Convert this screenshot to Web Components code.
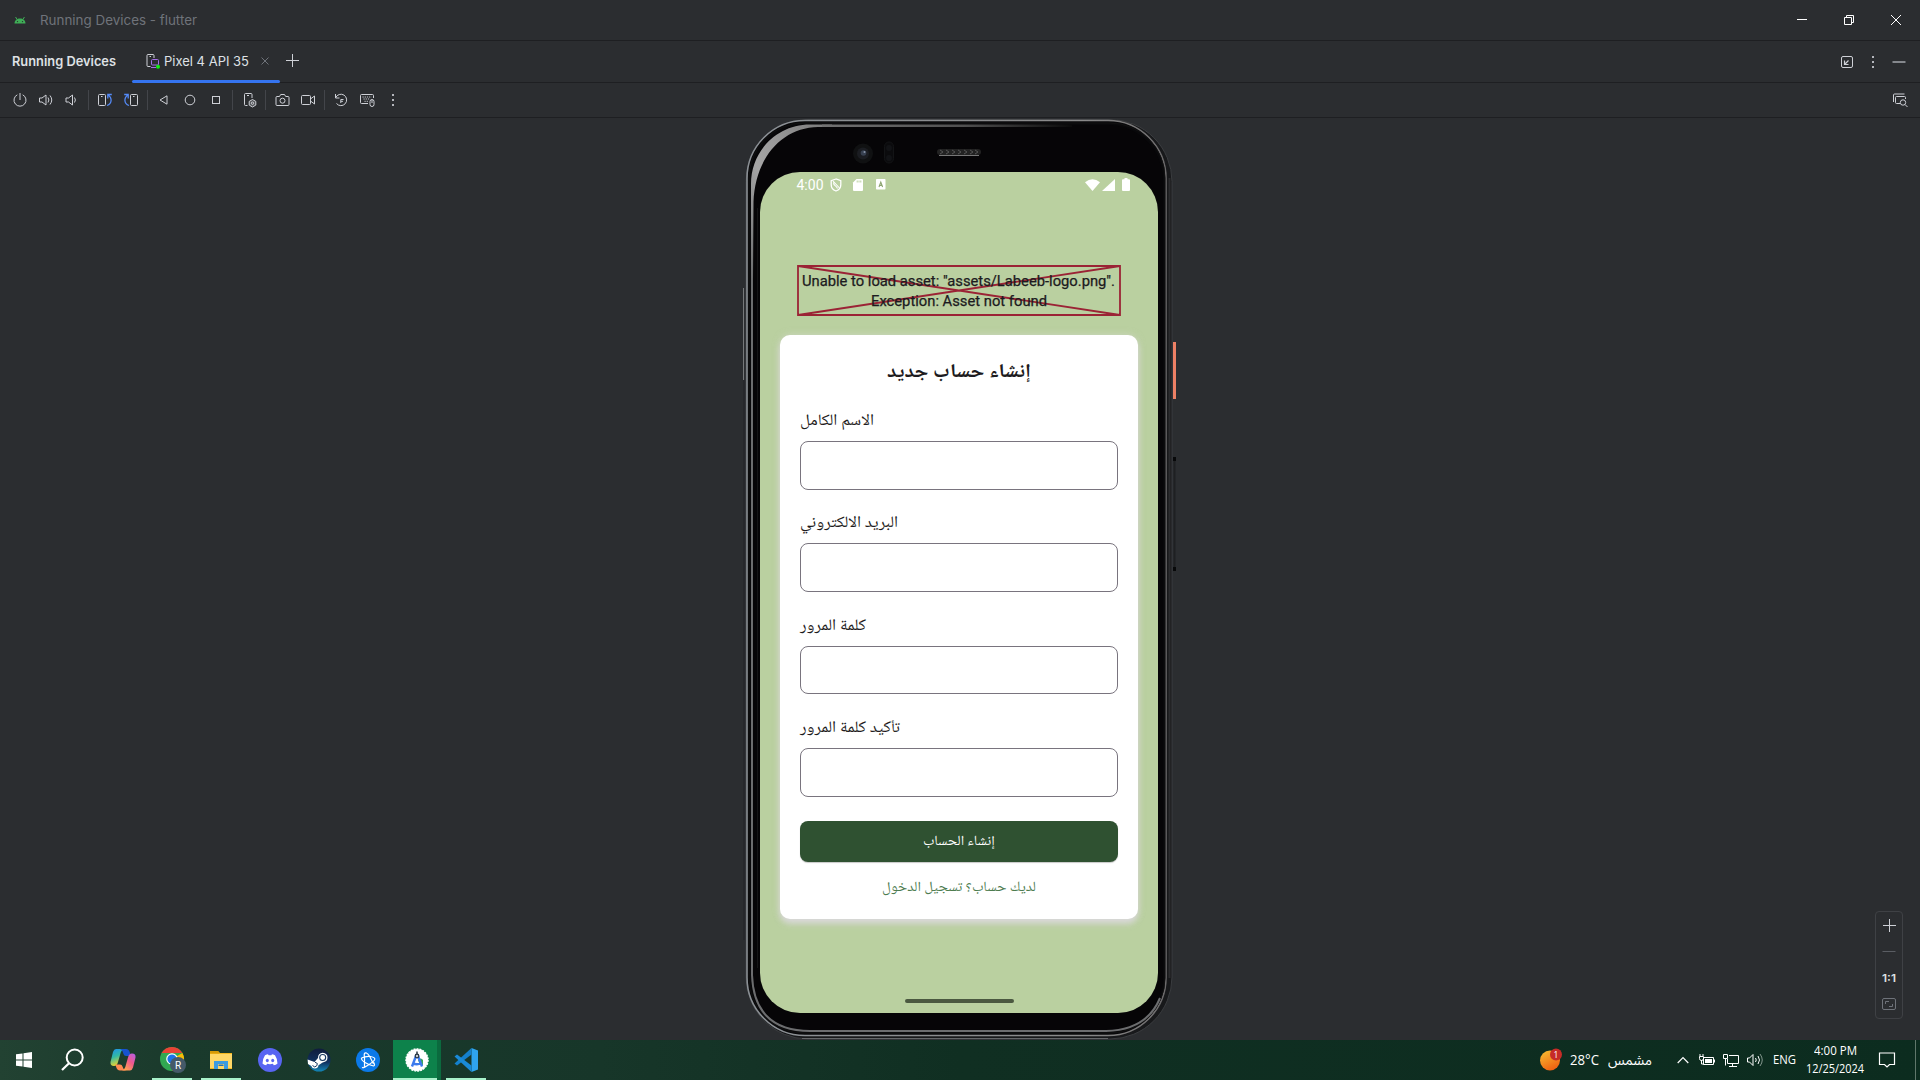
<!DOCTYPE html>
<html lang="en"><head><meta charset="utf-8"><title>Running Devices - flutter</title>
<style>
html,body{margin:0;height:100%;overflow:hidden;background:#2b2d30}
body{font-family:Inter,"Noto Sans",sans-serif}
</style></head><body><desktop-shell></desktop-shell>
<script>
const define=(name,css,html,after)=>customElements.define(name,class extends HTMLElement{
 constructor(){super();this.attachShadow({mode:'open'})}
 connectedCallback(){this.shadowRoot.innerHTML='<style>*{box-sizing:border-box}'+css+'</style>'+(typeof html==='function'?html(this):html);if(after)after(this)}
});

/* Single line of text stretched horizontally to a given width */
define('fit-text',':host{display:block;flex:none;white-space:nowrap}span{display:inline-block;transform-origin:0 50%}','<span><slot></slot></span>',el=>{
 const w=+el.getAttribute('w');el.style.width=w+'px';
 const s=el.shadowRoot.querySelector('span');const n=s.getBoundingClientRect().width;
 if(n)s.style.transform='scaleX('+(w/n)+')';
});

const I={
android:[12,12,'<path d="M0.5 9.5C.5 6.5 3 4.5 6 4.5s5.500 2 5.500 5z" fill="#3fae57"/><path d="M3 5.500 1.600 3M9 5.500 10.400 3" stroke="#3fae57"/><circle cx="3.500" cy="7.600" r=".7" fill="#2b2d30"/><circle cx="8.500" cy="7.600" r=".7" fill="#2b2d30"/>'],
device:[16,16,'<path d="M5.500 13.500H3a1 1 0 0 1-1-1V2.500a1 1 0 0 1 1-1h5a1 1 0 0 1 1 1V5" stroke="#ced0d6"/><path d="M4.500 3.500h1.500" stroke="#ced0d6"/><rect x="6.500" y="6.500" width="7" height="5.500" rx="1" stroke="#a571e6"/><path d="M6 14.500h5" stroke="#a571e6"/><circle cx="13" cy="13.800" r="2" fill="#10f010"/>'],
closeS:[10,10,'<path d="m1.500 1.500 7 7m0-7-7 7" stroke="#6f737a"/>'],
plus:[14,14,'<path d="M7.500 1v13M1 7.500h13" stroke="#ced0d6"/>'],
power:[14,14,'<path d="M4.300 1.800a6 6 0 1 0 5.400 0M7 0v7" stroke="#ced0d6"/>'],
volup:[16,14,'<path d="M1.500 5v4h2.500L8 12V2L4 5z" stroke="#ced0d6"/><path d="M10 4.500q1.800 2.500 0 5M12 2.500q3.500 4.500 0 9" stroke="#ced0d6"/>'],
voldn:[16,14,'<path d="M3 5v4h2.500l4 3V2l-4 3z" stroke="#ced0d6"/><path d="M11.500 4.500q1.800 2.500 0 5" stroke="#ced0d6"/>'],
rotl:[16,14,'<rect x="1.500" y="1.500" width="7" height="11" rx="1" stroke="#ced0d6"/><path d="M4 3.500h1.500" stroke="#ced0d6"/><path d="M10 12.500c5-1.500 5.500-7.500 1-10.500M14.800 1.500h-4v4" stroke="#548af7" stroke-width="1.300"/>'],
rotr:[16,14,'<rect x="7.500" y="1.500" width="7" height="11" rx="1" stroke="#ced0d6"/><path d="M10 3.500h1.500" stroke="#ced0d6"/><path d="M6 12.500C1 11 .5 5 5 2M1.200 1.500h4v4" stroke="#548af7" stroke-width="1.300"/>'],
back:[12,12,'<path d="M9 1.800v8.400L2 6z" stroke="#ced0d6"/>'],
home:[12,12,'<circle cx="6" cy="6" r="4.800" stroke="#ced0d6"/>'],
recent:[12,12,'<rect x="2.500" y="2.500" width="7" height="7" stroke="#ced0d6"/>'],
devset:[14,14,'<path d="M5.500 12.500h-2a1 1 0 0 1-1-1V1.500a1 1 0 0 1 1-1h5.500a1 1 0 0 1 1 1V5M5 2.500h2" stroke="#ced0d6"/><path d="m10.500 6.500 3.300 1.900v3.700L10.500 14l-3.300-1.900V8.400z" fill="#54565a" stroke="#ced0d6"/><circle cx="10.500" cy="10.200" r="1.200" stroke="#ced0d6"/>'],
camera:[15,14,'<path d="M2 3.500h2.500l1.200-2h3.800l1.200 2h2.300a1 1 0 0 1 1 1v7a1 1 0 0 1-1 1H2a1 1 0 0 1-1-1v-7a1 1 0 0 1 1-1z" stroke="#ced0d6"/><circle cx="7.500" cy="7.700" r="2.500" stroke="#ced0d6"/>'],
video:[16,14,'<rect x="1.500" y="2.500" width="9" height="9" rx="1" stroke="#ced0d6"/><path d="m10.500 6 4-3v8l-4-3" stroke="#ced0d6"/>'],
snap:[14,14,'<path d="M1.500 1v4h4M1.700 4.700A5.700 5.700 0 1 1 2.500 10.500" stroke="#ced0d6"/><path d="M9.500 6.500H6.800V10M6.800 8.300H9" stroke="#ced0d6"/>'],
keyb:[16,14,'<path d="M9 10.500H2.500a1 1 0 0 1-1-1v-7a1 1 0 0 1 1-1h11a1 1 0 0 1 1 1V5" stroke="#ced0d6"/><path d="M3.500 4h9M4.500 6h6M5.500 8.300h4" stroke="#ced0d6" stroke-dasharray="1.200 1"/><rect x="11" y="6.500" width="4" height="7" rx="2" stroke="#ced0d6"/><path d="M13 7v3" stroke="#ced0d6"/>'],
more:[4,14,'<path d="M1 1h2v2H1zm0 5h2v2H1zm0 5h2v2H1z" fill="#b4b6bc"/>'],
min:[10,10,'<path d="M0 4.500h10" stroke="#fff"/>'],
max:[10,10,'<path d="M.5 2.500h7v7h-7zM2.500 2.500v-2h7v7h-2" stroke="#fff"/>'],
close:[10,10,'<path d="m0 0 10 10M10 0 0 10" stroke="#fff"/>'],
dock:[12,12,'<rect x=".5" y=".5" width="11" height="11" rx="1.500" stroke="#ced0d6"/><path d="M7.500 4.500 4 8M3.500 4.500v4h4" stroke="#ced0d6" stroke-width="1.200"/>'],
hide:[14,14,'<path d="M.5 7h13" stroke="#85888d" stroke-width="2"/>'],
inspect:[16,14,'<path d="M1.500 9V2a1 1 0 0 1 1-1h10M8 10.500H4.500a1 1 0 0 1-1-1v-5a1 1 0 0 1 1-1h8a1 1 0 0 1 1 1V6" stroke="#ced0d6"/><circle cx="11" cy="9.500" r="2.700" stroke="#ced0d6"/><path d="m13 11.500 2.500 2.500" stroke="#ced0d6"/>'],
fit:[14,12,'<rect x=".5" y=".5" width="13" height="11" rx="1.500" stroke="#6f737a"/><path d="M3.500 6V3.500H7M10.500 6v2.500H7" stroke="#6f737a"/>'],
minus:[14,2,'<path d="M.5 1.500h13" stroke="#5a5d63"/>'],
vpn:[12,14,'<path d="M6 1 1.200 2.700v4C1.200 9.800 3.200 12 6 13c2.800-1 4.800-3.200 4.800-6.300v-4z" stroke="#fff" stroke-width="1.300"/><path d="m3 3 6.500 7M3.500 4.500C3.500 8 6 7 7.500 10.500" stroke="#fff" stroke-width="1.100"/>'],
sd:[10,12,'<path d="M3.500 0H9a1 1 0 0 1 1 1v10a1 1 0 0 1-1 1H1a1 1 0 0 1-1-1V3.500z" fill="#fff"/><path d="M4.200 1.500v2M6 1.500v2M7.800 1.500v2" stroke="#bad0a0"/>'],
abox:[10,11,'<rect width="9.500" height="10.500" rx=".8" fill="#fff"/><path d="m3 8 1.800-5 1.800 5M3.600 6.400h2.400" stroke="#8da572" stroke-width="1.100"/>'],
wifi:[15,12,'<path d="M7.500 12 0 3.200Q7.500-2.600 15 3.200z" fill="#fff"/>'],
signal:[13,12,'<path d="M13 0v12H0z" fill="#fff"/>'],
batt:[8,13,'<path d="M2.500 0h3v1.300H7a1 1 0 0 1 1 1V12a1 1 0 0 1-1 1H1a1 1 0 0 1-1-1V2.300a1 1 0 0 1 1-1h1.500z" fill="#fff"/>'],
win:[16,16,'<path d="M0 2.300 6.500 1.400V7.500H0zM7.500 1.200 16 0v7.500H7.500zM0 8.500h6.500v6.100L0 13.700zM7.500 8.500H16V16l-8.500-1.200z" fill="#fff"/>'],
search:[24,24,'<circle cx="13.700" cy="9.500" r="8" stroke="#fff" stroke-width="2"/><path d="M8 15.300 1 22" stroke="#fff" stroke-width="2.200"/>'],
copilot:[26,24,'<defs><linearGradient id="a" x1="0" y1="0" x2=".3" y2="1"><stop stop-color="#1b8ff0"/><stop offset=".5" stop-color="#32b9a5"/><stop offset="1" stop-color="#e8d531"/></linearGradient><linearGradient id="b" x1="1" y1="0" x2=".3" y2="1"><stop stop-color="#b260ee"/><stop offset=".5" stop-color="#f0588c"/><stop offset="1" stop-color="#ffa350"/></linearGradient></defs><path d="M6 1h8q-3 1-4 6l-2 7q-1 4-4 4-4 0-3.500-4L3 4Q4 1 6 1z" fill="url(#a)"/><path d="M9 1h7q3 0 4 4l1 3h-5q-2 0-2.500-2C12.500 2 11 1 9 1z" fill="#1752cf"/><path d="M20 22.500h-8q3-1 4-6l2-7q1-4 4-4 4 0 3.500 4L23 19.500q-1 3-3 3z" fill="url(#b)"/><path d="M17 22.500h-7q-3 0-4-4l-.7-2H10q2 0 2.500 2c1 3 2.500 4 4.500 4z" fill="#ff8b52"/>'],
chrome:[26,26,'<circle cx="13" cy="12" r="12" fill="#31a852"/><path d="M13 12 23.400 6A12 12 0 0 1 13 24z" fill="#fbbc05"/><path d="M2.600 6A12 12 0 0 1 23.400 6H13v6z" fill="#e94235"/><path d="M2.600 6 8 15l5-3V6z" fill="#31a852"/><circle cx="13" cy="12" r="5.800" fill="#fff"/><circle cx="13" cy="12" r="4.600" fill="#1b73e8"/><circle cx="19" cy="18" r="8" fill="#455a69"/><text x="19" y="21.500" font-family="Roboto" font-size="10" text-anchor="middle" fill="#fff">R</text>'],
folder:[22,20,'<path d="M0 1h8l2 2h12v16H0z" fill="#f4b81f"/><path d="M0 1h8l1.500 2.500H0z" fill="#d79a06"/><path d="M0 4h22v14H0z" fill="#ffd767"/><path d="M4 11h14v8H4z" fill="#3d9be0"/><path d="M8 14h6v5H8z" fill="#ffd767"/><path d="M8.500 14.500h5v1.500h-5z" fill="#2470b8"/>'],
discord:[24,24,'<circle cx="12" cy="12" r="12" fill="#5865f2"/><path d="M7 7.200Q9 6.300 10 6.300l.6 1h2.800l.6-1q1 0 3 .9 2.800 4.300 2.500 8.300-1.500 1.400-3.700 1.800l-.9-1.500q-2.900.9-5.800 0l-.9 1.500Q6 16.900 4.500 15.500 4.200 11.500 7 7.200z" fill="#fff"/><ellipse cx="9.300" cy="12.500" rx="1.500" ry="1.700" fill="#5865f2"/><ellipse cx="14.700" cy="12.500" rx="1.500" ry="1.700" fill="#5865f2"/>'],
steam:[24,24,'<defs><linearGradient id="s" x1="0" y1="0" x2="0" y2="1"><stop stop-color="#101c3c"/><stop offset=".6" stop-color="#10315f"/><stop offset="1" stop-color="#1387b8"/></linearGradient></defs><circle cx="12" cy="12" r="11.500" fill="url(#s)"/><path d="M.6 11.500 7.500 14l3.500-4q0-5 4.700-5.200 4.800.4 4.800 4.800t-4.800 4.800l-4.200 2.800q-.5 3.300-3.700 3.300-2.800 0-3.500-2.500L1 16z" fill="#fff"/><circle cx="15.700" cy="9.500" r="3" stroke="#173862" stroke-width="1.100"/><path d="M5.500 17.500q2.300 2.800 4.300.2t-1.800-3.500" stroke="#173862"/>'],
bnet:[24,24,'<circle cx="12" cy="12" r="12" fill="#0b79e8"/><g stroke="#fff" stroke-width="1.200"><path d="M8.500 19V9Q7.500 4.500 10 4.800 12 5.500 14 9l3.500 7"/><path d="M5.500 10q4-2 9-1.500 5.500 1 4 3.500Q17 14 11.500 17.500T6.500 19"/><path d="M5.500 10Q5 12 9 14.500t8.500 3.500q2-.5 0-4"/></g>'],
studio:[24,24,'<circle cx="13" cy="12" r="11" fill="#fff" stroke="#fff" stroke-dasharray="2 1" stroke-width="1.500"/><path d="M14 12q3-3 5 0v5h-3z" fill="#3ba55c"/><path d="m12 8-4 10.500M14 8l4 10.500M8.500 15.500q4.500 1.500 8.500 0" stroke="#3c7bed" stroke-width="2.400"/><circle cx="13" cy="8" r="1.800" fill="#c4c8cc" stroke="#273441" stroke-width="1.200"/><path d="M13 3.500v3" stroke="#273441" stroke-width="1.500"/>'],
vscode:[24,24,'<path d="M17.500 0 24 2.500v19L17.500 24z" fill="#2fa4ef"/><path d="M17.500 0v6.500L3 17.500.5 15.500z" fill="#1480cc"/><path d="M.5 8.500 3 6.500l14.500 11V24z" fill="#1a8ad7"/>'],
sun:[22,22,'<defs><linearGradient id="g" x1=".2" y1="0" x2=".7" y2="1"><stop stop-color="#f8bb30"/><stop offset="1" stop-color="#ee5c10"/></linearGradient></defs><circle cx="11" cy="11.500" r="10" fill="url(#g)"/><circle cx="17" cy="5.500" r="6" fill="#c62c27"/><text x="17" y="8.500" font-family="Open Sans" font-size="8.500" text-anchor="middle" fill="#fff">1</text>'],
chev:[12,8,'<path d="m.7 7 5.300-5.500L11.300 7" stroke="#fff" stroke-width="1.200"/>'],
tbatt:[16,14,'<path d="M4.500 4.500h10v7h-10zM15.500 6.500v3" stroke="#fff"/><path d="M6 6h7v4H6z" fill="#fff"/><path d="M1 1v2M4 1v2M.5 3.500h4v2a2 2 0 0 1-4 0zM2.500 7v4H5" stroke="#fff"/>'],
net:[16,14,'<path d="M6 2.500h9.500v8H4.500V6M9.500 10.500v3M6 13.500h8" stroke="#fff"/><path d="M.5 1.500h4v4h-4zM2.500 5.500v7" stroke="#fff"/>'],
tvol:[17,14,'<path d="M.5 5v4h2L6 12.500v-11L2.500 5z" stroke="#fff"/><path d="M8.500 5q1.500 2 0 4M11 3q3 4 0 8" stroke="#fff"/><path d="M13 1q4.500 6 0 12" stroke="#82958c"/>'],
note:[16,16,'<path d="M.5 1h15v11.500h-5L8 15l-2.500-2.500h-5z" stroke="#fff" stroke-width="1.200"/>']
};
define('ui-icon',':host{display:block;flex:none}svg{display:block;overflow:visible}',el=>{const [w,h,p]=I[el.getAttribute('name')];
 return `<svg width="${w}" height="${h}" viewBox="0 0 ${w} ${h}" fill="none">${p}</svg>`});
/* Fixed-width cell that centres an icon */
define('icon-cell',':host{display:flex;flex:none;align-items:center;justify-content:center}',el=>{el.style.width=el.getAttribute('w')+'px';return `<ui-icon name="${el.getAttribute('name')}"></ui-icon>`});
define('tool-sep',':host{display:block;flex:none;width:1px;height:20px;background:#43454a}','');

define('title-bar',':host{display:flex;height:41px;border-bottom:1px solid #1e1f22;align-items:center;color:#6f737a;font-size:13px}.g{flex:1}',
`<icon-cell name="android" w="40"></icon-cell><fit-text w="157">Running Devices - flutter</fit-text><div class="g"></div>
<icon-cell name="min" w="46"></icon-cell><icon-cell name="max" w="48"></icon-cell><icon-cell name="close" w="46"></icon-cell><div style="width:1px"></div>`);

define('device-tabs',`:host{display:flex;height:42px;border-bottom:1px solid #1e1f22;align-items:center;color:#dfe1e5;font-size:13px;padding-left:12px}
.t{display:flex;align-items:center;height:42px;width:148px;margin-left:16px;padding:0 10px 1px 13px;position:relative}
.t:after{content:"";position:absolute;left:0;right:0;bottom:0;height:3px;border-radius:2px;background:#3574f0}.g{flex:1}b{font-weight:600}`,
`<fit-text w="104" style="padding-bottom:1px"><b>Running Devices</b></fit-text><div class="t"><ui-icon name="device" style="margin-right:3px"></ui-icon><fit-text w="85">Pixel 4 API 35</fit-text><icon-cell name="closeS" w="31"></icon-cell></div>
<icon-cell name="plus" w="24" style="padding-bottom:3px"></icon-cell><div class="g"></div><icon-cell name="dock" w="26"></icon-cell><icon-cell name="more" w="26"></icon-cell><icon-cell name="hide" w="26"></icon-cell><div style="width:8px"></div>`);

define('device-toolbar',':host{display:flex;height:35px;border-bottom:1px solid #1e1f22;align-items:center;padding-left:7px}.g{flex:1}',
`<icon-cell name="power" w="26"></icon-cell><icon-cell name="volup" w="26"></icon-cell><icon-cell name="voldn" w="23"></icon-cell><div style="width:6px"></div><tool-sep></tool-sep>
<icon-cell name="rotl" w="32"></icon-cell><icon-cell name="rotr" w="20"></icon-cell><div style="width:6px"></div><tool-sep></tool-sep>
<icon-cell name="back" w="32"></icon-cell><icon-cell name="home" w="20"></icon-cell><icon-cell name="recent" w="32"></icon-cell><tool-sep></tool-sep>
<icon-cell name="devset" w="32"></icon-cell><tool-sep></tool-sep><icon-cell name="camera" w="32"></icon-cell><icon-cell name="video" w="20"></icon-cell><div style="width:6px"></div><tool-sep></tool-sep>
<icon-cell name="snap" w="32"></icon-cell><icon-cell name="keyb" w="20"></icon-cell><icon-cell name="more" w="32"></icon-cell><div class="g"></div><icon-cell name="inspect" w="40"></icon-cell>`);

define('form-field',`:host{display:flex;flex-direction:column;flex:none;height:102.4px}.l{height:39px;line-height:39px;font-size:16px}
.i{height:48.500px;border:1px solid #79747e;border-radius:8px}`,
'<div class="l"><slot></slot></div><div class="i"></div>');

define('signup-card',`:host{display:flex;flex-direction:column;width:358px;height:583.500px;background:#fff;border-radius:10px;box-shadow:0 5px 6px rgba(224,217,230,.75),0 0 7px rgba(220,220,215,.55);padding:18px 20px 0;color:#1d1b20;font-family:"Noto Naskh Arabic UI","Noto Sans Arabic","DejaVu Sans",sans-serif}
.h{font-weight:700;font-size:19.500px;height:49px;line-height:39px;align-self:center;flex:none}
.b{height:41px;flex:none;border-radius:8px;background:#2f5131;color:#fff;display:flex;align-items:center;justify-content:center;font-size:14px;box-shadow:0 1px 1px rgba(0,0,0,.22);margin-top:9.400px}
.a{align-self:center;color:#4d7c50;font-size:14px;height:52px;line-height:52px}`,
`<div class="h"><fit-text w="144">إنشاء حساب جديد</fit-text></div>
<form-field><fit-text w="74">الاسم الكامل</fit-text></form-field><form-field><fit-text w="98">البريد الالكتروني</fit-text></form-field>
<form-field><fit-text w="66">كلمة المرور</fit-text></form-field><form-field><fit-text w="100">تأكيد كلمة المرور</fit-text></form-field>
<div class="b"><fit-text w="72">إنشاء الحساب</fit-text></div><div class="a"><fit-text w="154">لديك حساب؟ تسجيل الدخول</fit-text></div>`);

define('asset-error',`:host{display:grid;width:324px;height:51px;color:#1d1b20;font:400 14px/20px Roboto,sans-serif;-webkit-text-stroke:.25px #1d1b20}
:host>*{grid-area:1/1}.t{display:flex;flex-direction:column;align-items:center;padding:6px 1px 0 0}svg{display:block}`,
`<div class="t"><fit-text w="313">Unable to load asset: "assets/Labeeb-logo.png".</fit-text><fit-text w="176">Exception: Asset not found</fit-text></div>
<svg width="324" height="51" fill="none" stroke="#9b2335" stroke-width="1.800"><path d="M1 1h322v49H1zM1 1l322 49M323 1 1 50"/></svg>`);

define('phone-screen',`:host{display:flex;flex-direction:column;align-items:center;width:398px;height:840.700px;border-radius:40px;background:#bad0a0;overflow:hidden}
.s{display:flex;align-items:center;align-self:stretch;height:25px;flex:none;padding:0 28px 0 36.500px;color:#fff;font:14px Roboto,sans-serif}.g{flex:1}
.n{width:109px;height:4px;border-radius:2px;background:#4b5840;margin-top:80px}`,
`<div class="s"><fit-text w="27">4:00</fit-text><ui-icon name="vpn" style="margin-left:6px"></ui-icon><ui-icon name="sd" style="margin-left:11px"></ui-icon><ui-icon name="abox" style="margin-left:13px"></ui-icon><div class="g"></div><ui-icon name="wifi"></ui-icon><ui-icon name="signal" style="margin-left:2px"></ui-icon><ui-icon name="batt" style="margin-left:7px"></ui-icon></div>
<asset-error style="margin-top:68px"></asset-error><signup-card style="margin-top:19px"></signup-card><div class="n"></div>`);

define('phone-device',`:host{display:grid;width:436px;height:923px}:host>*{grid-area:1/1}.f{display:block}phone-screen{margin:54px 0 0 18px}`,
`<svg class="f" width="436" height="923" fill="none"><defs>
<linearGradient id="band" x1="0" y1="1" x2="1" y2="0"><stop stop-color="#6c6d6f"/><stop offset=".4" stop-color="#a5a5a5"/><stop offset=".6" stop-color="#999"/><stop offset="1" stop-color="#777"/></linearGradient>
<linearGradient id="top" x1="60" y1="0" x2="330" y2="0" gradientUnits="userSpaceOnUse"><stop stop-color="#777"/><stop offset=".6" stop-color="#505050"/><stop offset="1" stop-color="#0a0a0a"/></linearGradient>
<linearGradient id="rim" x1="0" y1="0" x2="1" y2="0"><stop stop-color="#8b9095"/><stop offset=".8" stop-color="#8a8a8a"/><stop offset="1" stop-color="#6c6a6b"/></linearGradient></defs>
<path d="M1.500 170v92" stroke="#77797b"/><path d="M2 262v560" stroke="#222326"/>
<rect x="4" y="1.500" width="426" height="919.500" rx="62" fill="#18191b" stroke="#3b3d40"/>
<path d="M60 920.500H366" stroke="#66686a"/>
<rect x="5" y="2.500" width="419" height="915" rx="58" fill="#08080a" stroke="url(#rim)" stroke-width="1.600"/>
<rect x="7" y="5" width="416" height="910" rx="55" stroke="#111"/>
<rect x="9" y="7" width="412" height="906" rx="55" fill="#060507"/>
<path d="M10 100V857Q12 912.800 68 913H364Q405 912 418 880" stroke="#6c6d6f" stroke-width="2"/>
<path d="M9 160V66C9 33 35 6.500 68 6.500H90V9H76C40 9.500 13 40 11.500 84L11 160z" fill="url(#band)"/>
<path d="M80 7.800H330" stroke="url(#top)" stroke-width="2.400"/>
<path d="M15.500 90V850" stroke="#151517"/><path d="M427.500 60V860" stroke="#2c2d2f" stroke-width="2"/>
<path d="M432.500 224v57" stroke="#ed8065" stroke-width="3"/><path d="M432.500 339v114" stroke="#1f2022" stroke-width="2"/><path d="M432.500 339v4m0 106v4" stroke="#08090a" stroke-width="3"/>
<circle cx="121" cy="35.500" r="10" fill="#101112"/><circle cx="121" cy="35.500" r="6" fill="#1b1d22"/><circle cx="121.500" cy="35" r="2.800" fill="#374050"/><circle cx="122.500" cy="34" r="1" fill="#8794a8"/>
<rect x="142.500" y="24" width="9" height="21" rx="4.500" fill="#0b0b0d" stroke="#131416"/><circle cx="147" cy="30" r="3" fill="#121316"/><circle cx="147" cy="40" r="3" fill="#121316"/>
<rect x="195" y="31" width="44" height="6" rx="3" fill="#222"/><path d="m198 32 3 2-3 2m6-4 3 2-3 2m6-4 3 2-3 2m6-4 3 2-3 2m6-4 3 2-3 2m6-4 3 2-3 2m5-4 3 2-3 2" stroke="#555"/><path d="M197 37.500h40" stroke="#777"/></svg>
<phone-screen></phone-screen>`);

define('zoom-panel',`:host{display:flex;flex-direction:column;align-items:center;width:28px;height:108px;border:1px solid #3f4145;border-radius:4px;padding-top:6px;color:#dfe1e5;font:600 11px/14px Inter}`,
`<ui-icon name="plus" style="margin-right:1px"></ui-icon><ui-icon name="minus" style="margin-top:18px"></ui-icon><fit-text w="14" style="margin-top:19px">1:1</fit-text><ui-icon name="fit" style="margin-top:13px"></ui-icon>`);

define('device-stage',':host{display:grid;flex:1;min-height:0}:host>*{grid-area:1/1}phone-device{margin-left:742px}zoom-panel{justify-self:end;align-self:end;margin:0 17px 22px 0}','<phone-device></phone-device><zoom-panel></zoom-panel>');

define('task-button',`:host{display:flex;flex:none;width:48px;height:40px;align-items:center;justify-content:center;border-bottom:2px solid transparent;padding-top:2px;margin-right:1px}
:host([open]){width:40px;margin:0 5px 0 4px;border-color:#a9f2cb}:host([active]){width:44px;margin:0 5px 0 0;background:#0d824b;border-color:#a9f2cb;box-shadow:4px 0 #0b6a3e;padding-left:2px}`,el=>`<ui-icon name="${el.getAttribute('name')}"></ui-icon>`);

define('task-bar',`:host{display:flex;height:40px;flex:none;align-items:center;color:#fff;font:12px/16px "Open Sans","DejaVu Sans",sans-serif;background:linear-gradient(90deg,#224232 0,#1a3a2c 180px,#173629 600px,#102f22 960px,#0c2c1f 1920px)}
.g{flex:1}.c{display:flex;flex-direction:column;align-items:center;width:70px;line-height:18px}.e{width:1px;height:40px;background:#60776b;margin-right:4px}`,
`<task-button name="win"></task-button><task-button name="search"></task-button><task-button name="copilot" style="margin-left:1px"></task-button><task-button name="chrome" open></task-button><task-button name="folder" open></task-button><task-button name="discord"></task-button><task-button name="steam"></task-button><task-button name="bnet"></task-button><task-button name="studio" active></task-button><task-button name="vscode" open></task-button>
<div class="g"></div><ui-icon name="sun"></ui-icon><fit-text w="29" style="margin-left:9px;font-size:14px">28°C</fit-text><fit-text w="44" style="margin-left:9px;margin-right:1px;font:14px 'Noto Sans Arabic','DejaVu Sans'">مشمس</fit-text>
<icon-cell name="chev" w="24" style="margin-left:18px"></icon-cell><icon-cell name="tbatt" w="24"></icon-cell><icon-cell name="net" w="24"></icon-cell><icon-cell name="tvol" w="24"></icon-cell><fit-text w="23" style="margin-left:6px">ENG</fit-text>
<div class="c" style="margin-left:4px"><fit-text w="43">4:00 PM</fit-text><fit-text w="58">12/25/2024</fit-text></div><icon-cell name="note" w="34"></icon-cell><div style="width:11px"></div><div class="e"></div>`);

define('desktop-shell',':host{display:flex;flex-direction:column;width:1920px;height:1080px;background:#2b2d30}title-bar,device-tabs,device-toolbar{flex:none}',
'<title-bar></title-bar><device-tabs></device-tabs><device-toolbar></device-toolbar><device-stage></device-stage><task-bar></task-bar>');
</script></body></html>
